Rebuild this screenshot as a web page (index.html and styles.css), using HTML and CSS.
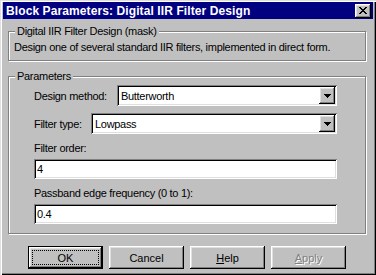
FILE: index.html
```html
<!DOCTYPE html>
<html lang="en">

<head>
    <meta charset="UTF-8">
    <title>Block Parameters: Digital IIR Filter Design</title>
    <link rel="stylesheet" href="styles.css">
</head>

<body>
    <div class="window">
        <div class="titlebar">
            <span class="title">Block Parameters: Digital IIR Filter Design</span>
            <button class="close-button" aria-label="Close">
                <svg width="8" height="7" viewBox="0 0 8 7" shape-rendering="crispEdges">
                    <path d="M0 0h2v1h-2zM6 0h2v1h-2zM1 1h2v1h-2zM5 1h2v1h-2zM2 2h4v1h-4zM3 3h2v1h-2zM2 4h4v1h-4zM1 5h2v1h-2zM5 5h2v1h-2zM0 6h2v1h-2zM6 6h2v1h-2z" fill="#000"/>
                </svg>
            </button>
        </div>

        <div class="main">
            <div class="group group-mask">
                <span class="group-title">Digital IIR Filter Design (mask)</span>
                <p class="description">Design one of several standard IIR filters, implemented in direct form.</p>
            </div>

            <div class="group group-params">
                <span class="group-title">Parameters</span>
                <div class="row">
                    <label class="row-label method-label">Design method:</label>
                    <div class="combo sunken">
                        <span class="combo-text">Butterworth</span>
                        <span class="combo-button raised">
                            <svg width="7" height="4" viewBox="0 0 7 4" shape-rendering="crispEdges">
                                <path d="M0 0h7v1h-7zM1 1h5v1h-5zM2 2h3v1h-3zM3 3h1v1h-1z" fill="#000"/>
                            </svg>
                        </span>
                    </div>
                </div>
                <div class="row">
                    <label class="row-label type-label">Filter type:</label>
                    <div class="combo sunken">
                        <span class="combo-text">Lowpass</span>
                        <span class="combo-button raised">
                            <svg width="7" height="4" viewBox="0 0 7 4" shape-rendering="crispEdges">
                                <path d="M0 0h7v1h-7zM1 1h5v1h-5zM2 2h3v1h-3zM3 3h1v1h-1z" fill="#000"/>
                            </svg>
                        </span>
                    </div>
                </div>
                <label class="field-label">Filter order:</label>
                <div class="edit sunken">4</div>
                <label class="field-label">Passband edge frequency (0 to 1):</label>
                <div class="edit sunken">0.4</div>
            </div>

            <div class="buttons">
                <button class="push default"><span class="focus">OK</span></button>
                <button class="push"><span class="caption">Cancel</span></button>
                <button class="push"><span class="caption"><u>H</u>elp</span></button>
                <button class="push" disabled><span class="caption"><u>A</u>pply</span></button>
            </div>
        </div>
    </div>
</body>

</html>
```

FILE: styles.css
```css
* {
    box-sizing: border-box;
}

body {
    margin: 0;
    background-color: #c0c0c0;
    font-family: 'Liberation Sans', Arial, sans-serif;
    font-size: 11px;
    letter-spacing: -0.3px;
    color: #000;
}

.window {
    width: 376px;
    height: 275px;
    padding: 2px 3px 3px 3px;
    background-color: #c0c0c0;
    box-shadow: inset 1px 1px #dfdfdf, inset 2px 2px #fff, inset -1px -1px #000, inset -2px -2px #808080;
    display: flex;
    flex-direction: column;
}

.titlebar {
    height: 17px;
    background-color: #000080;
    color: #fff;
    display: flex;
    align-items: center;
    justify-content: space-between;
    padding: 0 2px 0 3px;
}

.title {
    font-weight: bold;
    font-size: 12px;
    letter-spacing: 0.1px;
    line-height: 14px;
}

.raised,
.close-button,
.push {
    background-color: #c0c0c0;
    box-shadow: inset -1px -1px #000, inset 1px 1px #fff, inset -2px -2px #808080, inset 2px 2px #dfdfdf;
}

.sunken {
    background-color: #fff;
    box-shadow: inset 1px 1px #808080, inset -1px -1px #fff, inset 2px 2px #000, inset -2px -2px #dfdfdf;
}

.close-button {
    width: 16px;
    height: 14px;
    border: none;
    padding: 0 0 1px 0;
    display: flex;
    justify-content: center;
    align-items: center;
}

.main {
    flex: 1;
    padding: 0 7px 0 5px;
    display: flex;
    flex-direction: column;
}

.group {
    position: relative;
    border: 1px solid #808080;
    box-shadow: inset 1px 1px #fff, 1px 1px #fff;
}

.group-title {
    position: absolute;
    top: -7px;
    left: 6px;
    padding: 0 2px;
    line-height: 13px;
    background-color: #c0c0c0;
}

.group-mask {
    margin-top: 12px;
    padding: 9px 5px 6px 5px;
}

.description {
    margin: 0;
    line-height: 13px;
    white-space: nowrap;
}

.group-params {
    margin-top: 15px;
    padding: 8px 28px 9px 25px;
    display: flex;
    flex-direction: column;
}

.row {
    display: flex;
    align-items: center;
    height: 21px;
}

.row + .row {
    margin-top: 7px;
}

.method-label {
    width: 83px;
}

.type-label {
    width: 57px;
}

.combo {
    flex: 1;
    height: 21px;
    padding: 2px;
    display: flex;
    align-items: center;
}

.combo-text {
    flex: 1;
    padding-left: 2px;
}

.combo-button {
    width: 16px;
    height: 17px;
    display: flex;
    justify-content: center;
    align-items: center;
}

.field-label {
    margin-top: 8px;
    line-height: 13px;
}

.edit {
    margin-top: 4px;
    height: 20px;
    padding: 0 3px;
    line-height: 20px;
}

.buttons {
    margin-top: 12px;
    display: flex;
    justify-content: center;
    gap: 6px;
}

.push {
    width: 75px;
    height: 23px;
    border: none;
    padding: 4px;
    font: inherit;
    color: #000;
    display: flex;
}

.push .focus,
.push .caption {
    flex: 1;
    display: flex;
    justify-content: center;
    align-items: center;
    border: 1px solid transparent;
}

.push.default {
    box-shadow: inset 0 0 0 1px #000, inset -2px -2px #000, inset 2px 2px #fff, inset -3px -3px #808080, inset 3px 3px #dfdfdf;
}

.push.default .focus {
    border: 1px dotted #000;
}

.push:disabled {
    color: #808080;
    text-shadow: 1px 1px 0 #fff;
}
```
